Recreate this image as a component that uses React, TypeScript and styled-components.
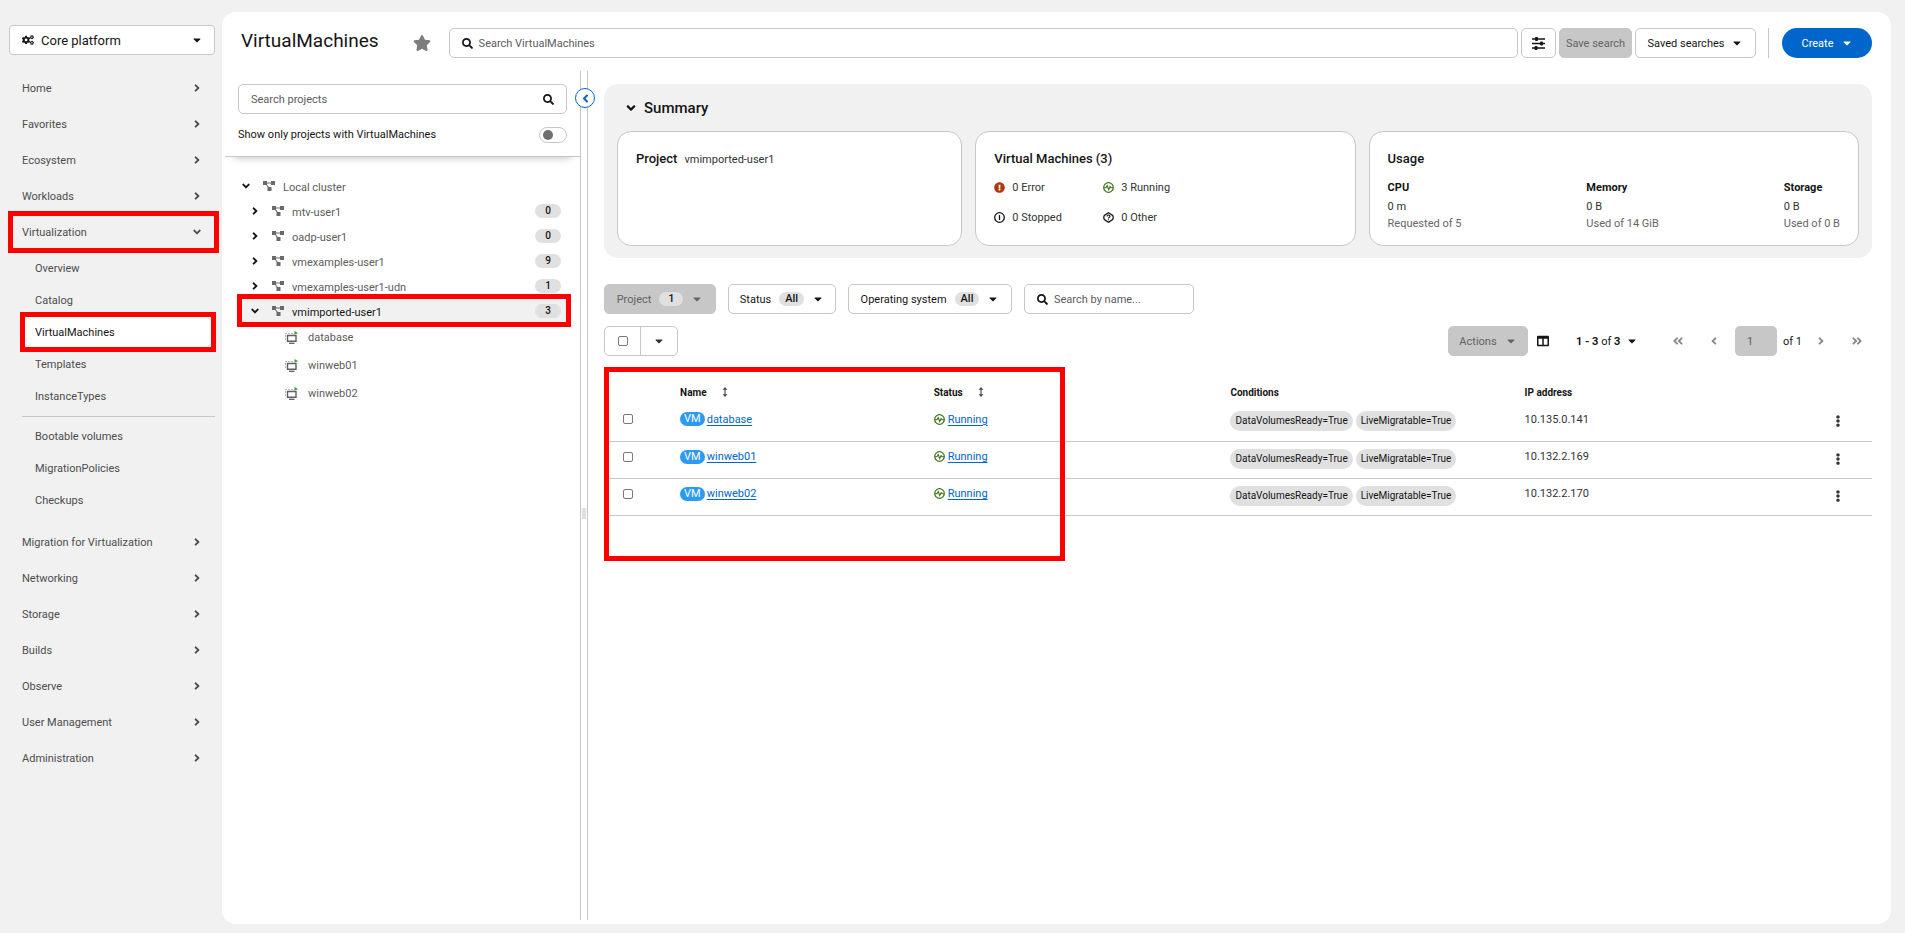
import React from "react";
import styled, { createGlobalStyle, css } from "styled-components";
import {
  FaAngleDoubleLeft,
  FaAngleDoubleRight,
  FaAngleDown,
  FaAngleLeft,
  FaAngleRight,
  FaCaretDown,
  FaCogs,
  FaColumns,
  FaEllipsisV,
  FaExclamationCircle,
  FaSearch,
  FaStar,
} from "react-icons/fa";

const GlobalStyle = createGlobalStyle`
  *, *::before, *::after { box-sizing: border-box; }
  body {
    margin: 0;
    background: #f1f1f1;
    color: #333;
    font: 400 11px/19px Roboto, "Liberation Sans", sans-serif;
  }
  button, input { font: inherit; color: inherit; margin: 0; }
  button { cursor: pointer; }
  h1, h2, h3, p, ul, dl, dd { margin: 0; padding: 0; }
  ul { list-style: none; }
  svg { display: block; flex: none; }
`;

const line = "#c7c7c7";

const highlight = css`
  position: relative;
  &::after {
    content: "";
    position: absolute;
    border: 5px solid #ff0000;
    pointer-events: none;
    z-index: 2;
  }
`;

const Shell = styled.div`
  display: grid;
  grid-template-columns: 222px minmax(0, 1fr);
  min-height: 100vh;
`;

/* ---------- Sidebar ---------- */

const Sidebar = styled.nav`
  padding: 25px 7px 24px 9px;
`;

const Perspective = styled.button`
  display: flex;
  align-items: center;
  gap: 7px;
  width: 100%;
  height: 30px;
  margin-bottom: 15px;
  padding: 0 11px 0 12px;
  border: 1px solid ${line};
  border-radius: 4px;
  background: #fff;
  color: #151515;
  font-size: 13px;

  span {
    flex: 1;
    text-align: left;
  }
`;

const NavLink = styled.a<{ $boxed?: boolean }>`
  display: flex;
  align-items: center;
  justify-content: space-between;
  height: 36px;
  padding: 0 12px 0 13px;
  color: #4d4d4d;
  text-decoration: none;
  ${(p) =>
    p.$boxed &&
    css`
      ${highlight}
      &::after {
        inset: -3px -4px -3px -1px;
      }
    `}
`;

const SubList = styled.ul`
  padding: 2px 0 8px 13px;
`;

const SubLink = styled.a<{ $current?: boolean }>`
  display: flex;
  align-items: center;
  height: 32px;
  padding-left: 13px;
  color: #4d4d4d;
  text-decoration: none;
  ${(p) =>
    p.$current &&
    css`
      ${highlight}
      background: #fff;
      color: #151515;
      &::after {
        inset: -4px -1px -4px -2px;
      }
    `}
`;

const SubDivider = styled.li`
  height: 1px;
  margin: 4px 0 3px;
  background: ${line};
`;

/* ---------- Main panel and header ---------- */

const Main = styled.main`
  display: flex;
  flex-direction: column;
  margin: 12px 14px 9px 0;
  border-radius: 14px;
  background: #fff;
`;

const Header = styled.header`
  display: flex;
  align-items: center;
  height: 59px;
  padding: 3px 19px 0;
`;

const Title = styled.h1`
  margin-right: 34px;
  padding-bottom: 4px;
  color: #151515;
  font-size: 19px;
  font-weight: 400;
  line-height: 26px;
`;

const IconButton = styled.button`
  display: inline-flex;
  align-items: center;
  justify-content: center;
  padding: 0;
  border: 0;
  background: none;
  color: inherit;
`;

const Field = styled.label<{ $grow?: boolean; $width?: number }>`
  display: flex;
  align-items: center;
  flex: ${(p) => (p.$grow ? "1" : "none")};
  gap: 6px;
  width: ${(p) => (p.$width ? `${p.$width}px` : "auto")};
  height: 30px;
  padding: 0 12px;
  border: 1px solid ${line};
  border-radius: 5px;
  background: #fff;
  color: #151515;

  input {
    flex: 1;
    min-width: 0;
    width: 100%;
    padding: 0;
    border: 0;
    outline: 0;
    background: none;
  }
  input::placeholder {
    color: #5c5c5c;
    opacity: 1;
  }
`;

const HeaderTools = styled.div`
  display: flex;
  align-items: center;
  flex: 1;
  gap: 3px;
  margin-left: 18px;
`;

const Button = styled.button<{ $muted?: boolean; $gap?: number; $pad?: number; $width?: number }>`
  display: inline-flex;
  align-items: center;
  justify-content: center;
  flex: none;
  gap: ${(p) => p.$gap ?? 8}px;
  width: ${(p) => (p.$width ? `${p.$width}px` : "auto")};
  height: 30px;
  padding: 0 ${(p) => p.$pad ?? 12}px;
  border: 1px solid ${line};
  border-radius: 5px;
  background: ${(p) => (p.$muted ? line : "#fff")};
  color: ${(p) => (p.$muted ? "#636363" : "#151515")};
  white-space: nowrap;
`;

const CreateButton = styled(Button)`
  border: 0;
  border-radius: 15px;
  background: #0066cc;
  color: #fff;
`;

const ToolDivider = styled.span`
  width: 1px;
  height: 30px;
  margin: 0 10px 0 9px;
  background: ${line};
`;

const Body = styled.div`
  display: grid;
  grid-template-columns: 358px 8px minmax(0, 1fr);
  flex: 1;
  padding-bottom: 4px;
`;

/* ---------- Project tree ---------- */

const TreeFilters = styled.div`
  margin-left: 3px;
  padding: 13px 13px 12px;
  border-bottom: 1px solid ${line};
  box-shadow: 0 9px 8px -9px rgba(0, 0, 0, 0.3);
`;

const ToggleRow = styled.label`
  display: flex;
  align-items: center;
  justify-content: space-between;
  margin-top: 11px;
  color: #151515;
`;

const Switch = styled.input`
  appearance: none;
  display: flex;
  align-items: center;
  width: 28px;
  height: 16px;
  padding: 0 3px;
  border: 1px solid ${line};
  border-radius: 8px;
  background: #fff;

  &::before {
    content: "";
    width: 10px;
    height: 10px;
    border-radius: 5px;
    background: #707070;
  }
`;

const Tree = styled.ul`
  padding: 16px 12px 0 16px;
`;

const TreeRow = styled.li<{ $level: number; $selected?: boolean }>`
  display: flex;
  align-items: center;
  height: ${(p) => (p.$level === 2 ? 28 : 25)}px;
  padding: 0 7px 0 ${(p) => [4, 13, 47][p.$level]}px;
  color: ${(p) => (p.$selected ? "#151515" : "#5c5c5c")};
  ${(p) =>
    p.$selected &&
    css`
      ${highlight}
      background: #f1f1f1;
      &::after {
        inset: -4px -3px -4px -1px;
      }
    `}
`;

const TreeToggle = styled(IconButton)`
  width: 8px;
  height: 18px;
  margin-right: 13px;
  color: #151515;
`;

const TreeName = styled.span<{ $leaf?: boolean }>`
  flex: 1;
  margin-left: ${(p) => (p.$leaf ? 10 : 8)}px;
  padding-top: ${(p) => (p.$leaf ? 0 : 4)}px;
`;

const Count = styled.span`
  width: 26px;
  height: 14px;
  border-radius: 7px;
  background: #e0e0e0;
  color: #151515;
  font-size: 10px;
  font-weight: 500;
  line-height: 14px;
  text-align: center;
`;

const Splitter = styled.div`
  position: relative;
  border: solid ${line};
  border-width: 0 1px;
`;

const CollapseButton = styled(IconButton)`
  position: absolute;
  top: 17px;
  left: -6px;
  width: 20px;
  height: 20px;
  border: 1px solid #0066cc;
  border-radius: 10px;
  background: #fff;
  color: #0066cc;
`;

const Grip = styled.span`
  position: absolute;
  top: 437px;
  left: 1px;
  width: 4px;
  height: 11px;
  background: #e0e0e0;
`;

/* ---------- Summary ---------- */

const Content = styled.section`
  padding: 13px 19px 0 16px;
`;

const Summary = styled.section`
  padding: 12px 13px;
  border-radius: 14px;
  background: #f1f1f1;
`;

const SummaryTitle = styled.h2`
  color: #151515;
  font-size: 15px;
  font-weight: 500;
  line-height: 24px;

  button {
    display: flex;
    gap: 6px;
    margin-left: 7px;
  }
`;

const Cards = styled.div`
  display: grid;
  grid-template-columns: 345fr 380fr 490fr;
  gap: 13px;
  margin-top: 11px;
`;

const Card = styled.article`
  min-height: 115px;
  padding: 17px 18px 12px;
  border: 1px solid ${line};
  border-radius: 14px;
  background: #fff;
`;

const CardTitle = styled.h3`
  color: #151515;
  font-size: 13px;
  font-weight: 500;
  line-height: 20px;

  span {
    margin-left: 7px;
    color: #333;
    font-size: 11px;
    font-weight: 400;
  }
`;

const StatusGrid = styled.ul`
  display: grid;
  grid-template-columns: repeat(2, 109px);
  row-gap: 11px;
  margin-top: 9px;

  li {
    display: flex;
    align-items: center;
    gap: 7px;
  }
`;

const UsageList = styled.dl`
  display: flex;
  justify-content: space-between;
  margin-top: 9px;

  dt {
    color: #151515;
    font-weight: 700;
  }
  dd {
    line-height: 20px;
  }
`;

const UsageNote = styled.p`
  color: #666;
  line-height: 14px;
`;

/* ---------- Filters, actions, table ---------- */

const Toolbar = styled.div`
  display: flex;
  align-items: center;
  gap: 12px;
  margin-top: 26px;
`;

const ActionBar = styled.div`
  display: flex;
  align-items: center;
  justify-content: space-between;
  margin-top: 12px;
`;

const Pill = styled.span`
  display: inline-block;
  min-width: 24px;
  padding: 0 6px;
  border-radius: 7px;
  background: #e0e0e0;
  color: #151515;
  font-weight: 500;
  line-height: 14px;
  text-align: center;
`;

const SplitButton = styled.div`
  display: grid;
  grid-template-columns: 36px 36px;
  height: 30px;
  border: 1px solid ${line};
  border-radius: 5px;

  label {
    display: flex;
    align-items: center;
    justify-content: center;
    border-right: 1px solid ${line};
  }
`;

const Checkbox = styled.input`
  appearance: none;
  display: block;
  width: 10px;
  height: 10px;
  border: 1px solid #7a7a7a;
  border-radius: 2px;
  background: #fff;
`;

const Pager = styled.div`
  display: flex;
  align-items: center;
  color: #151515;
`;

const PagerIcons = styled.div`
  display: flex;
  align-items: center;
  justify-content: space-between;
  width: 48px;
  color: #8a8a8a;
`;

const PagerBack = styled(PagerIcons)`
  margin: 0 15px 0 34px;
`;

const PagerForward = styled(PagerIcons)`
  margin: 0 9px 0 13px;
`;

const PageInput = styled.input`
  width: 42px;
  height: 30px;
  margin-right: 6px;
  padding: 0 12px;
  border: 0;
  border-radius: 5px;
  background: ${line};
  color: #636363;
`;

const RangeButton = styled(IconButton)`
  justify-content: space-between;
  width: 62px;
  margin-left: 27px;
`;

const TableFrame = styled.div`
  ${highlight}
  margin-top: 24px;
  &::after {
    inset: -13px auto -45px 0;
    width: 461px;
  }
`;

const Table = styled.table`
  width: 100%;
  border-collapse: collapse;
  table-layout: fixed;

  th {
    height: 24px;
    padding: 0;
    color: #151515;
    font-size: 10px;
    font-weight: 700;
    text-align: left;
  }
`;

const Cell = styled.td<{ $low?: boolean }>`
  height: 37px;
  padding: 0 0 ${(p) => (p.$low ? 2 : 6)}px;
  border-bottom: 1px solid ${line};
  vertical-align: middle;
`;

const Inline = styled.div<{ $gap: number; $indent?: number }>`
  display: flex;
  align-items: center;
  gap: ${(p) => p.$gap}px;
  padding-left: ${(p) => p.$indent ?? 0}px;
`;

const ResourceBadge = styled.span`
  height: 14px;
  padding: 0 4px;
  border-radius: 7px;
  background: #2b9af3;
  color: #fff;
  line-height: 14px;
`;

const TableLink = styled.a`
  color: #0066cc;
  text-decoration: underline;
  text-underline-offset: 2px;
`;

const Chip = styled.span`
  height: 20px;
  padding: 0 5px;
  border-radius: 10px;
  background: #e0e0e0;
  color: #151515;
  font-size: 10px;
  line-height: 20px;
`;

/* ---------- Drawn icons ---------- */

const ProjectIcon = () => (
  <svg width="12" height="10" viewBox="0 0 12 10" fill="#6a6a6a" aria-hidden="true">
    <path d="M0 0h4v4H0zM8 0h4v4H8zM4.500 6h4v4h-4z" />
    <path d="M3 1.500h6v1H3zM2.600 3.300l.9-.5 2.600 3.700-.9.500z" />
  </svg>
);

const MachineIcon = () => (
  <svg width="13" height="13" viewBox="0 0 13 13" fill="none" aria-hidden="true">
    <path d="M.5 9V2.500H8" stroke="#b5b5b5" strokeDasharray="2 1" />
    <path d="M2.500 4.500h8.500v5.800H2.500z" stroke="#5c5f63" strokeWidth="1.400" />
    <path d="M4 12.300h5.500" stroke="#5c5f63" strokeWidth="1.300" />
    <path d="M9.500 0l3.500 1.900-3.500 1.900z" fill="#3e9b3e" />
  </svg>
);

const RunningIcon = () => (
  <svg width="11" height="11" viewBox="0 0 11 11" fill="none" stroke="#3d7317" aria-hidden="true">
    <circle cx="5.500" cy="5.500" r="4.800" strokeWidth="1.200" />
    <path d="M.8 5.800h2.200l1.200-2.200 1.500 3.900 1.400-3 .9 1.300h2.200" strokeWidth="1.100" />
  </svg>
);

const StoppedIcon = () => (
  <svg width="11" height="11" viewBox="0 0 11 11" fill="none" stroke="#151515" aria-hidden="true">
    <circle cx="5.500" cy="5.500" r="4.800" strokeWidth="1.300" />
    <path d="M5.500 3v5" strokeWidth="1.300" />
  </svg>
);

const OtherIcon = () => (
  <svg width="11" height="11" viewBox="0 0 11 11" fill="none" stroke="#151515" aria-hidden="true">
    <path d="M5.500.7l4.200 2.700.6 2.100-.6 2.100-4.200 2.700-4.200-2.700-.6-2.100.6-2.100z" strokeWidth="1.300" />
    <path d="M4 4.400c0-2 3-1.900 3-.1 0 1-1.500 1-1.500 2.100M5.500 7.200v1.100" strokeWidth="1.100" />
  </svg>
);

const SlidersIcon = () => (
  <svg width="13" height="13" viewBox="0 0 13 13" fill="#151515" aria-hidden="true">
    <path d="M0 1.300h13v1.400H0zM0 5.800h13v1.400H0zM0 10.300h13v1.400H0z" />
    <rect x="3" y="0" width="3" height="4" rx="1" />
    <rect x="8" y="4.500" width="3" height="4" rx="1" />
    <rect x="2.500" y="9" width="3" height="4" rx="1" />
  </svg>
);

const SortIcon = () => (
  <svg width="6" height="10" viewBox="0 0 6 10" fill="#4d4d4d" aria-hidden="true">
    <path d="M3 0l2.500 2.700H3.600v4.600h1.900L3 10 .5 7.300h1.900V2.700H.5z" />
  </svg>
);

/* ---------- Data ---------- */

const navTop = ["Home", "Favorites", "Ecosystem", "Workloads"];
const navBottom = [
  "Migration for Virtualization",
  "Networking",
  "Storage",
  "Builds",
  "Observe",
  "User Management",
  "Administration",
];
const projects = [
  { name: "mtv-user1", count: 0 },
  { name: "oadp-user1", count: 0 },
  { name: "vmexamples-user1", count: 9 },
  { name: "vmexamples-user1-udn", count: 1 },
  { name: "vmimported-user1", count: 3, open: true },
];
const machines = [
  { name: "database", ip: "10.135.0.141" },
  { name: "winweb01", ip: "10.132.2.169" },
  { name: "winweb02", ip: "10.132.2.170" },
];
const usage = [
  { name: "CPU", value: "0 m", note: "Requested of 5" },
  { name: "Memory", value: "0 B", note: "Used of 14 GiB" },
  { name: "Storage", value: "0 B", note: "Used of 0 B" },
];

const NavItem = ({ label, open }: { label: string; open?: boolean }) => (
  <NavLink href="#" $boxed={open}>
    {label}
    {open ? <FaAngleDown size={12} /> : <FaAngleRight size={12} />}
  </NavLink>
);

export default function App() {
  return (
    <>
      <GlobalStyle />
      <Shell>
        <Sidebar aria-label="Main">
          <Perspective>
            <FaCogs size={12} />
            <span>Core platform</span>
            <FaCaretDown size={12} />
          </Perspective>
          {navTop.map((n) => (
            <NavItem key={n} label={n} />
          ))}
          <NavItem label="Virtualization" open />
          <SubList>
            {["Overview", "Catalog", "VirtualMachines", "Templates", "InstanceTypes"].map((n) => (
              <li key={n}>
                <SubLink href="#" $current={n === "VirtualMachines"}>
                  {n}
                </SubLink>
              </li>
            ))}
            <SubDivider role="separator" />
            {["Bootable volumes", "MigrationPolicies", "Checkups"].map((n) => (
              <li key={n}>
                <SubLink href="#">{n}</SubLink>
              </li>
            ))}
          </SubList>
          {navBottom.map((n) => (
            <NavItem key={n} label={n} />
          ))}
        </Sidebar>

        <Main>
          <Header>
            <Title>VirtualMachines</Title>
            <IconButton aria-label="Add to favorites">
              <FaStar size={18} color="#7d7d7d" />
            </IconButton>
            <HeaderTools>
              <Field $grow>
                <FaSearch size={11} />
                <input type="text" placeholder="Search VirtualMachines" aria-label="Search VirtualMachines" />
              </Field>
              <Button $width={35} $pad={0} aria-label="Advanced search">
                <SlidersIcon />
              </Button>
              <Button $muted $width={73} $pad={0} disabled>
                Save search
              </Button>
              <Button $width={121} $pad={0} $gap={7}>
                Saved searches <FaCaretDown size={12} />
              </Button>
              <ToolDivider />
              <CreateButton $width={90} $pad={0} $gap={7}>
                Create <FaCaretDown size={12} />
              </CreateButton>
            </HeaderTools>
          </Header>

          <Body>
            <aside>
              <TreeFilters>
                <Field>
                  <input type="text" placeholder="Search projects" aria-label="Search projects" />
                  <FaSearch size={11} />
                </Field>
                <ToggleRow>
                  Show only projects with VirtualMachines
                  <Switch type="checkbox" role="switch" />
                </ToggleRow>
              </TreeFilters>
              <Tree>
                <TreeRow $level={0}>
                  <TreeToggle aria-label="Collapse Local cluster">
                    <FaAngleDown size={12} />
                  </TreeToggle>
                  <ProjectIcon />
                  <TreeName>Local cluster</TreeName>
                </TreeRow>
                {projects.map((p) => (
                  <TreeRow key={p.name} $level={1} $selected={p.open}>
                    <TreeToggle aria-label={p.name}>
                      {p.open ? <FaAngleDown size={12} /> : <FaAngleRight size={12} />}
                    </TreeToggle>
                    <ProjectIcon />
                    <TreeName>{p.name}</TreeName>
                    <Count>{p.count}</Count>
                  </TreeRow>
                ))}
                {machines.map((m) => (
                  <TreeRow key={m.name} $level={2}>
                    <MachineIcon />
                    <TreeName $leaf>{m.name}</TreeName>
                  </TreeRow>
                ))}
              </Tree>
            </aside>

            <Splitter>
              <CollapseButton aria-label="Hide project tree">
                <FaAngleLeft size={13} />
              </CollapseButton>
              <Grip />
            </Splitter>

            <Content>
              <Summary>
                <SummaryTitle>
                  <IconButton aria-expanded="true">
                    <FaAngleDown size={14} />
                    Summary
                  </IconButton>
                </SummaryTitle>
                <Cards>
                  <Card>
                    <CardTitle>
                      Project<span>vmimported-user1</span>
                    </CardTitle>
                  </Card>
                  <Card>
                    <CardTitle>Virtual Machines (3)</CardTitle>
                    <StatusGrid>
                      <li>
                        <FaExclamationCircle size={11} color="#b1380b" />0 Error
                      </li>
                      <li>
                        <RunningIcon />3 Running
                      </li>
                      <li>
                        <StoppedIcon />0 Stopped
                      </li>
                      <li>
                        <OtherIcon />0 Other
                      </li>
                    </StatusGrid>
                  </Card>
                  <Card>
                    <CardTitle>Usage</CardTitle>
                    <UsageList>
                      {usage.map((u) => (
                        <div key={u.name}>
                          <dt>{u.name}</dt>
                          <dd>
                            {u.value}
                            <UsageNote>{u.note}</UsageNote>
                          </dd>
                        </div>
                      ))}
                    </UsageList>
                  </Card>
                </Cards>
              </Summary>

              <Toolbar>
                <Button $muted disabled $width={112} $pad={0}>
                  Project <Pill>1</Pill> <FaCaretDown size={12} />
                </Button>
                <Button $width={108} $pad={0}>
                  Status <Pill>All</Pill> <FaCaretDown size={12} />
                </Button>
                <Button $width={164} $pad={0}>
                  Operating system <Pill>All</Pill> <FaCaretDown size={12} />
                </Button>
                <Field $width={170}>
                  <FaSearch size={11} />
                  <input type="text" placeholder="Search by name..." aria-label="Search by name" />
                </Field>
              </Toolbar>

              <ActionBar>
                <SplitButton>
                  <label>
                    <Checkbox type="checkbox" aria-label="Select all" />
                  </label>
                  <IconButton aria-label="Selection options">
                    <FaCaretDown size={12} />
                  </IconButton>
                </SplitButton>
                <Pager>
                  <Button $muted disabled $width={80} $pad={0}>
                    Actions <FaCaretDown size={12} />
                  </Button>
                  <Inline $gap={0} $indent={9}>
                    <IconButton aria-label="Manage columns">
                      <FaColumns size={12} />
                    </IconButton>
                  </Inline>
                  <RangeButton>
                    <span>
                      <b>1 - 3</b> of <b>3</b>
                    </span>
                    <FaCaretDown size={12} />
                  </RangeButton>
                  <PagerBack>
                    <IconButton disabled aria-label="First page">
                      <FaAngleDoubleLeft size={12} />
                    </IconButton>
                    <IconButton disabled aria-label="Previous page">
                      <FaAngleLeft size={12} />
                    </IconButton>
                  </PagerBack>
                  <PageInput type="text" defaultValue="1" disabled aria-label="Current page" />
                  of 1
                  <PagerForward>
                    <IconButton disabled aria-label="Next page">
                      <FaAngleRight size={12} />
                    </IconButton>
                    <IconButton disabled aria-label="Last page">
                      <FaAngleDoubleRight size={12} />
                    </IconButton>
                  </PagerForward>
                </Pager>
              </ActionBar>

              <TableFrame>
                <Table>
                  <colgroup>
                    <col width="6%" />
                    <col width="20%" />
                    <col width="23.4%" />
                    <col width="23.2%" />
                    <col />
                    <col width="70" />
                  </colgroup>
                  <thead>
                    <tr>
                      <th aria-label="Select" />
                      <th>
                        <Inline $gap={15}>
                          Name <SortIcon />
                        </Inline>
                      </th>
                      <th>
                        <Inline $gap={15}>
                          Status <SortIcon />
                        </Inline>
                      </th>
                      <th>Conditions</th>
                      <th>IP address</th>
                      <th aria-label="Actions" />
                    </tr>
                  </thead>
                  <tbody>
                    {machines.map((m) => (
                      <tr key={m.name}>
                        <Cell>
                          <Inline $gap={0} $indent={19}>
                            <Checkbox type="checkbox" aria-label={`Select ${m.name}`} />
                          </Inline>
                        </Cell>
                        <Cell>
                          <Inline $gap={2}>
                            <ResourceBadge>VM</ResourceBadge>
                            <TableLink href="#">{m.name}</TableLink>
                          </Inline>
                        </Cell>
                        <Cell>
                          <Inline $gap={3}>
                            <RunningIcon />
                            <TableLink href="#">Running</TableLink>
                          </Inline>
                        </Cell>
                        <Cell $low>
                          <Inline $gap={3}>
                            <Chip>DataVolumesReady=True</Chip>
                            <Chip>LiveMigratable=True</Chip>
                          </Inline>
                        </Cell>
                        <Cell>{m.ip}</Cell>
                        <Cell $low>
                          <Inline $gap={0} $indent={30}>
                            <IconButton aria-label={`Actions for ${m.name}`}>
                              <FaEllipsisV size={12} />
                            </IconButton>
                          </Inline>
                        </Cell>
                      </tr>
                    ))}
                  </tbody>
                </Table>
              </TableFrame>
            </Content>
          </Body>
        </Main>
      </Shell>
    </>
  );
}
